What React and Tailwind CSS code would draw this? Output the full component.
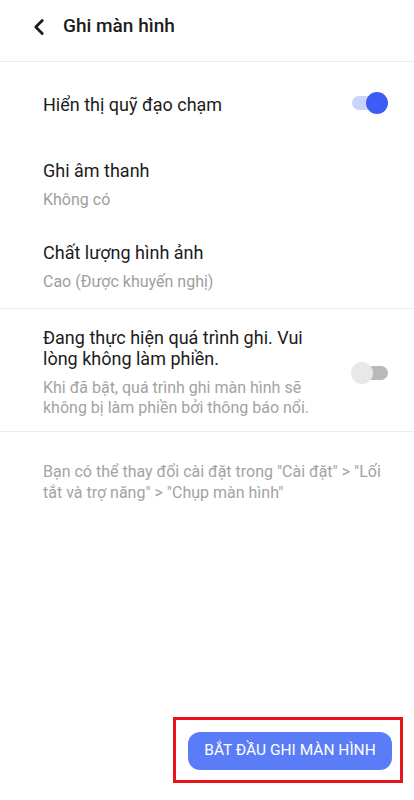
import { ChevronLeft } from 'lucide-react';

// Simple pill switch, knob drawn over the track
function Switch({ on }) {
  return (
    <div className="relative w-[38px] h-[22px] shrink-0">
      <div
        className={`absolute top-[4px] h-[14px] rounded-full ${
          on ? 'left-[1px] w-[34px] bg-[#c9d3fb]' : 'left-[4px] w-[33px] bg-[#b9b9b9]'
        }`}
      />
      <div
        className={`absolute top-0 h-[22px] w-[22px] rounded-full ${
          on ? 'left-[15px] bg-[#3d5cf5]' : 'left-0 bg-[#e8e8e8]'
        }`}
      />
    </div>
  );
}

function SettingRow({ title, value }) {
  return (
    <div className="h-[82px] flex flex-col justify-center pl-[43px] pr-6">
      <div className="text-[18px] leading-[22px] text-[#1c1c1c]">{title}</div>
      {value && <div className="mt-[8px] text-[16px] leading-[20px] text-[#9e9e9e]">{value}</div>}
    </div>
  );
}

export default function App() {
  return (
    <div className="w-[414px] h-[800px] bg-white flex flex-col font-['Roboto',sans-serif]">
      {/* Header */}
      <div className="h-[62px] flex items-center pb-[8px] border-b border-[#ececec]">
        <ChevronLeft className="ml-[26px] w-[26px] h-[26px] text-[#1c1c1c]" strokeWidth={2.6} />
        <h1 className="ml-[11px] text-[19px] font-medium text-[#1c1c1c]">Ghi màn hình</h1>
      </div>

      {/* Recording options */}
      <div className="border-b border-[#ececec]">
        <div className="h-[82px] flex items-center justify-between pl-[43px] pr-[25px]">
          <div className="text-[18px] text-[#1c1c1c] pt-[2px]">Hiển thị quỹ đạo chạm</div>
          <Switch on />
        </div>
        <SettingRow title="Ghi âm thanh" value="Không có" />
        <SettingRow title="Chất lượng hình ảnh" value="Cao (Được khuyến nghị)" />
      </div>

      <div className="flex items-center justify-between pl-[43px] pr-[25px] pt-[18px] pb-[13px] border-b border-[#ececec]">
        <div className="w-[290px]">
          <div className="text-[18px] leading-[21px] text-[#1c1c1c]">
            Đang thực hiện quá trình ghi. Vui lòng không làm phiền.
          </div>
          <div className="mt-[9px] text-[16px] leading-[20px] text-[#a3a3a3]">
            Khi đã bật, quá trình ghi màn hình sẽ không bị làm phiền bởi thông báo nổi.
          </div>
        </div>
        <Switch on={false} />
      </div>

      <div className="pl-[43px] pr-[24px] pt-[29px] text-[16px] leading-[21px] text-[#a3a3a3]">
        Bạn có thể thay đổi cài đặt trong "Cài đặt" &gt; "Lối tắt và trợ năng" &gt; "Chụp màn hình"
      </div>

      <div className="flex-1" />

      {/* Start button */}
      <div className="flex justify-end pr-[11px] pb-[17px]">
        <div className="border-[3px] border-[#e8141c] pl-[12px] pr-[8px] pt-[12px] pb-[10px]">
          <button className="w-[204px] h-[38px] rounded-[12px] bg-[#5b7cf7] text-white text-[15.5px]">
            BẮT ĐẦU GHI MÀN HÌNH
          </button>
        </div>
      </div>
    </div>
  );
}
